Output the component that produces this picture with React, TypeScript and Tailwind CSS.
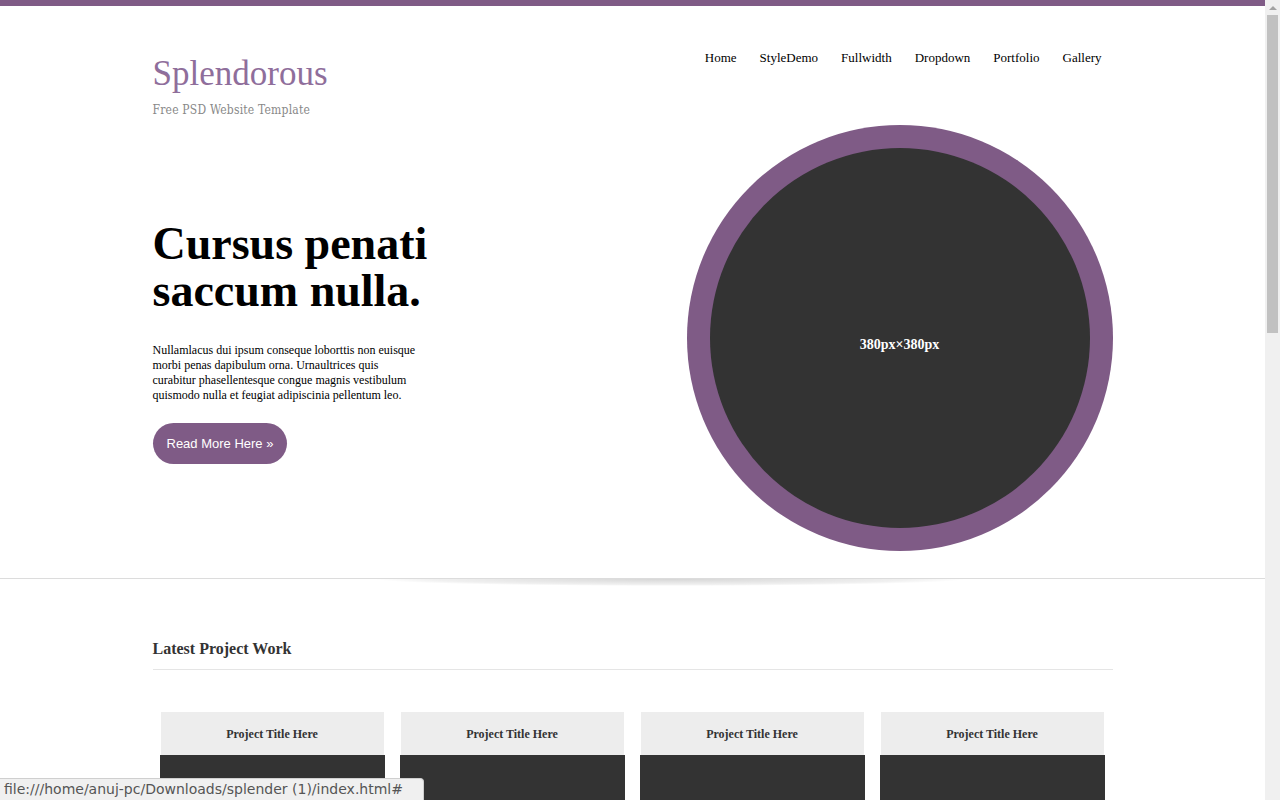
const NAV = ["Home", "StyleDemo", "Fullwidth", "Dropdown", "Portfolio", "Gallery"];

const PROJECTS = ["Project Title Here", "Project Title Here", "Project Title Here", "Project Title Here"];

function ProjectCard({ title }: { title: string }) {
  return (
    <div className="w-[225px] ml-[7px]">
      <div className="mx-px h-[43px] bg-[#ededed] flex items-center justify-center">
        <span className="text-[12px] font-bold text-[#333]">{title}</span>
      </div>
      <div className="h-[120px] bg-[#333]" />
    </div>
  );
}

export default function App() {
  return (
    <div className="h-screen flex overflow-hidden bg-white font-['Liberation_Serif',serif]">
      <main className="flex-1 min-w-0 relative">
        {/* top strip */}
        <div className="h-[6px] bg-[#7f5b86]" />

        <header className="w-[960px] mx-auto flex justify-between items-start">
          <div className="pt-[48px]">
            <h1 className="text-[35px] leading-[40px] text-[#8f6e9b]">Splendorous</h1>
            <p className="mt-[7px] text-[12px] text-[#888] tracking-[0.2px] font-['DejaVu_Serif',serif] [font-stretch:condensed]">
              Free PSD Website Template
            </p>
          </div>
          <nav className="pt-[37px] pr-[11px] flex gap-[23px] text-[13px] text-black">
            {NAV.map((item) => (
              <a key={item} href="#" className="leading-[30px]">
                {item}
              </a>
            ))}
          </nav>
        </header>

        {/* hero */}
        <section className="w-[960px] mx-auto flex items-start justify-between mt-[6px]">
          <div className="w-[290px] pt-[95px]">
            <h2 className="text-[46px] leading-[47px] font-bold text-black">
              Cursus penati
              <br />
              saccum nulla.
            </h2>
            <p className="mt-[29px] text-[12px] leading-[15px] text-black w-[266px]">
              Nullamlacus dui ipsum conseque loborttis non euisque morbi penas dapibulum orna. Urnaultrices quis
              curabitur phasellentesque congue magnis vestibulum quismodo nulla et feugiat adipiscinia pellentum leo.
            </p>
            <a
              href="#"
              className="mt-[20px] flex w-fit items-center h-[41px] px-[14px] rounded-full bg-[#7f5b86] text-white text-[13px] font-['Liberation_Sans',sans-serif]"
            >
              Read More Here »
            </a>
          </div>
          <div className="w-[426px] h-[426px] rounded-full bg-[#7f5b86] flex items-center justify-center">
            <div className="w-[380px] h-[380px] rounded-full bg-[#333] flex items-center justify-center">
              <span className="text-white text-[14px] font-bold mt-[12px]">380px×380px</span>
            </div>
          </div>
        </section>

        {/* divider with shadow */}
        <div className="mt-[27px] border-t border-[#dcdcdc]" />
        <div className="w-[592px] h-[7px] ml-[374px] bg-[radial-gradient(ellipse_50%_100%_at_50%_0%,rgba(0,0,0,0.16),rgba(0,0,0,0.06)_80%,rgba(0,0,0,0)_100%)]" />

        <section className="w-[960px] mx-auto">
          <h3 className="mt-[53px] text-[16px] font-bold text-[#333] leading-[20px] pb-[10px] border-b border-[#e5e5e5]">
            Latest Project Work
          </h3>
          <div className="mt-[42px] grid grid-cols-4">
            {PROJECTS.map((title, i) => (
              <ProjectCard key={i} title={title} />
            ))}
          </div>
        </section>

        {/* browser status bubble */}
        <div className="absolute left-0 bottom-0 h-[22px] w-[424px] bg-[#f0f0f0] border-t border-r border-[#cfcfcf] rounded-tr-[4px] flex items-center pl-[4px]">
          <span className="text-[14px] text-[#555] font-['DejaVu_Sans',sans-serif]">
            file:///home/anuj-pc/Downloads/splender (1)/index.html#
          </span>
        </div>
      </main>

      {/* scrollbar */}
      <aside className="w-[15px] bg-[#f0f0f0] flex flex-col items-center shrink-0">
        <div className="h-[15px] flex items-center justify-center">
          <div className="w-0 h-0 border-l-[4px] border-r-[4px] border-b-[4px] border-l-transparent border-r-transparent border-b-[#a3a3a3]" />
        </div>
        <div className="w-[11px] h-[318px] bg-[#c1c1c1]" />
      </aside>
    </div>
  );
}
